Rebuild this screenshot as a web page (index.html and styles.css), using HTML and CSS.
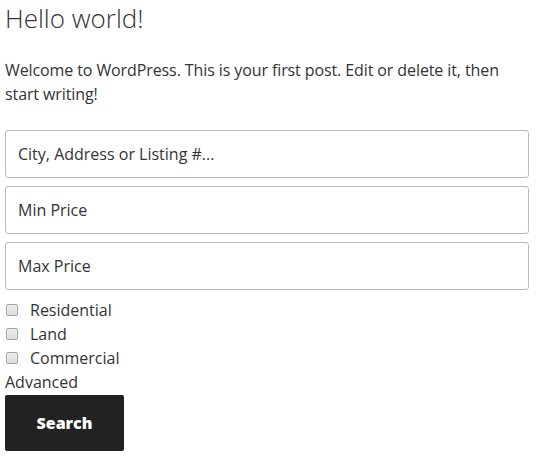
FILE: index.html
```html
<!DOCTYPE html>
<html>
<head>
<meta charset="utf-8">
<link rel="stylesheet" href="styles.css">
</head>
<body>
<article class="post">
  <h1 class="title">Hello world!</h1>
  <p class="intro">Welcome to WordPress. This is your first post. Edit or delete it, then start writing!</p>
  <form class="search">
    <input class="field" type="text" value="City, Address or Listing #...">
    <input class="field" type="text" value="Min Price">
    <input class="field" type="text" value="Max Price">
    <div class="checks">
      <label class="check"><input type="checkbox"><span>Residential</span></label>
      <label class="check"><input type="checkbox"><span>Land</span></label>
      <label class="check"><input type="checkbox"><span>Commercial</span></label>
    </div>
    <div class="advanced">Advanced</div>
    <button class="btn" type="button">Search</button>
  </form>
</article>
</body>
</html>
```
FILE: styles.css
```css
html, body {
  margin: 0;
  padding: 0;
  background: #fff;
}
body {
  font-family: "Open Sans", "Liberation Sans", sans-serif;
  color: #333;
  font-size: 16px;
}
.post {
  padding: 0 9px 0 5px;
}
.title {
  font-size: 26px;
  font-weight: 300;
  margin: 0;
  line-height: 36px;
  color: #333;
}
.intro {
  margin: 22px 0 0;
  line-height: 24px;
  letter-spacing: -0.1px;
}
.search {
  display: flex;
  flex-direction: column;
  margin-top: 24px;
}
.field {
  box-sizing: border-box;
  height: 48px;
  border: 1px solid #bbb;
  border-radius: 3px;
  padding: 0 12px;
  font: inherit;
  color: #333;
  margin-bottom: 8px;
  background: #fff;
}
.checks {
  display: flex;
  flex-direction: column;
}
.check {
  display: flex;
  align-items: center;
  height: 24px;
}
.check input {
  appearance: none;
  -webkit-appearance: none;
  box-sizing: border-box;
  margin: 0 12px 0 1px;
  width: 12px;
  height: 12px;
  border: 1px solid #a6a6a6;
  border-radius: 2px;
  background: linear-gradient(#ededed, #dedede);
}
.advanced {
  line-height: 24px;
}
.btn {
  align-self: flex-start;
  width: 119px;
  height: 56px;
  margin-top: 1px;
  background: #222;
  color: #fff;
  border: 0;
  border-radius: 2px;
  font-family: inherit;
  font-weight: 800;
  font-size: 16px;
}
```
